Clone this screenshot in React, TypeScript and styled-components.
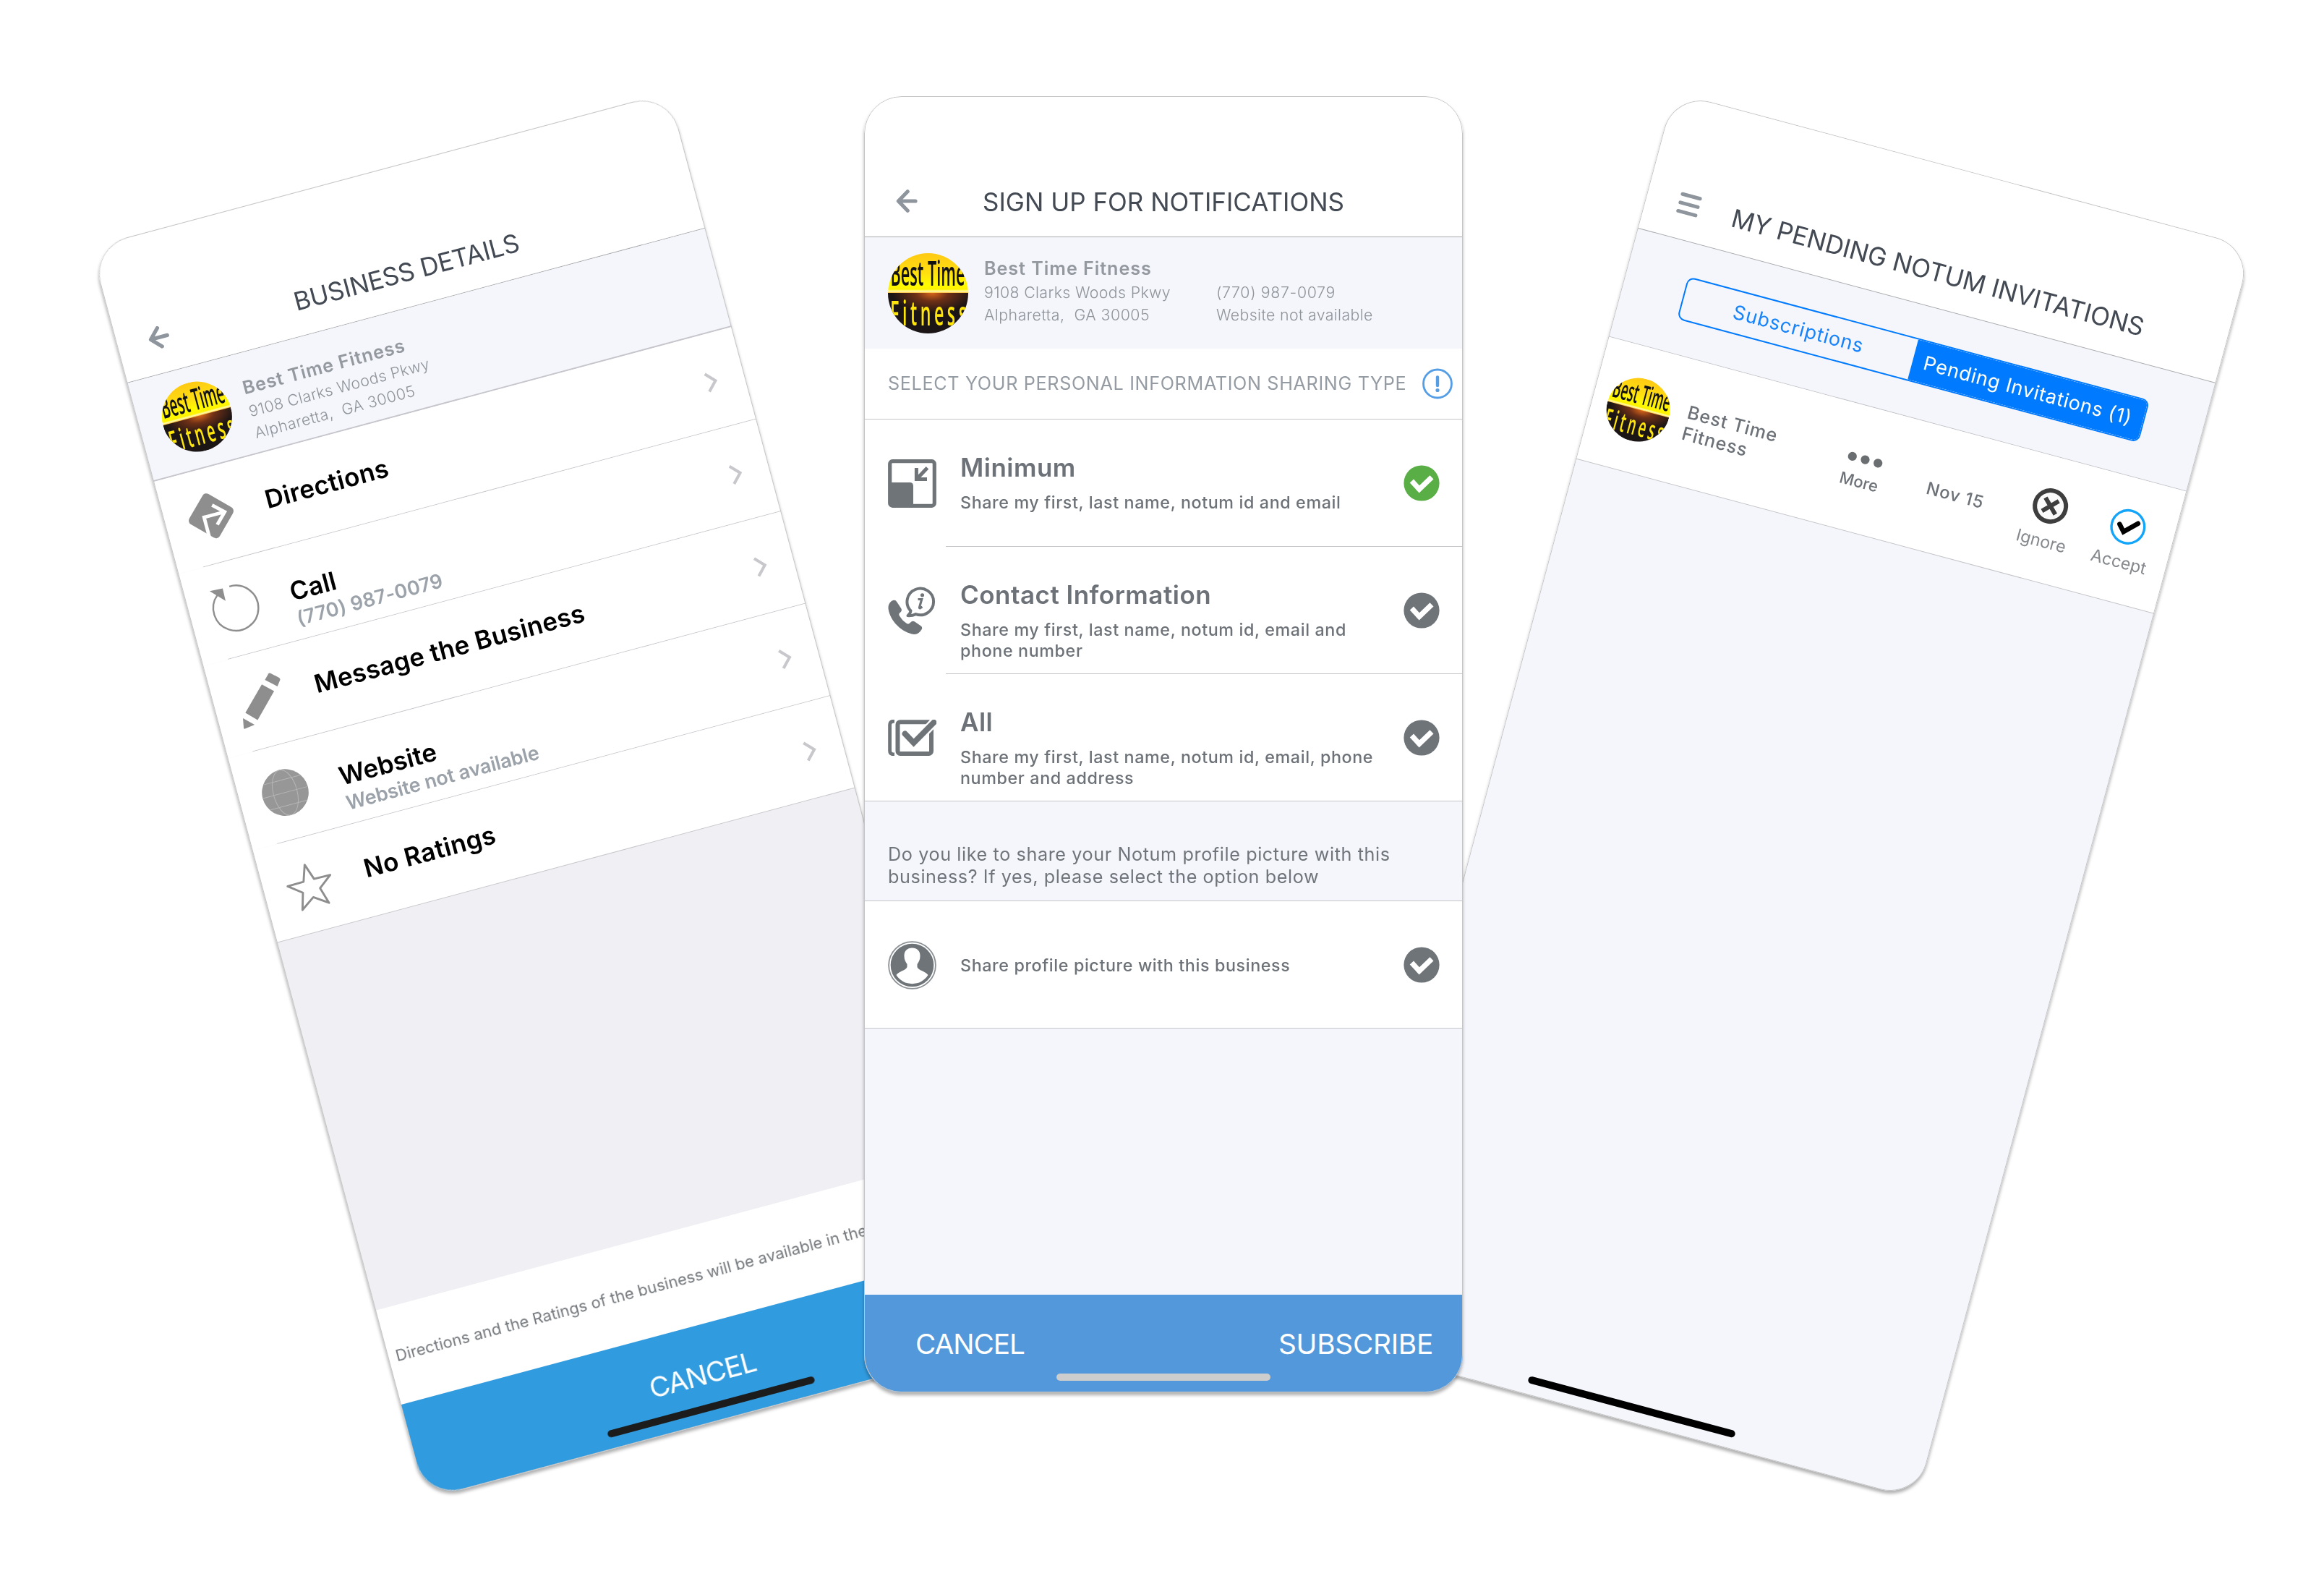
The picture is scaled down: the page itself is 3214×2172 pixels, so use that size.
import React from 'react';
import styled, { createGlobalStyle } from 'styled-components';

const GlobalStyle = createGlobalStyle`
  *, *::before, *::after { box-sizing: border-box; }
  body { margin: 0; background: #fff; }
  svg { display: block; flex: none; }
`;

/* ---------- canvas and phone shells ---------- */

const Stage = styled.main`
  position: relative;
  width: 3214px;
  height: 2172px;
  overflow: hidden;
  background: #fff;
  font-family: Inter, "Liberation Sans", sans-serif;
  white-space: pre;
`;

const PhoneSlot = styled.div<{ $x: number; $y: number }>`
  position: absolute;
  left: ${(p) => p.$x}px;
  top: ${(p) => p.$y}px;
  filter: drop-shadow(0 4px 2px rgba(0, 0, 0, 0.3));
`;

const Phone = styled.section<{ $tilt?: number; $bg?: string }>`
  position: relative;
  display: flex;
  flex-direction: column;
  width: 828px;
  height: 1792px;
  border-radius: 52px;
  overflow: hidden;
  background: ${(p) => p.$bg ?? '#f5f6fb'};
  transform: rotate(${(p) => p.$tilt ?? 0}deg);

  &::after {
    content: '';
    position: absolute;
    inset: 0;
    border: 1px solid #c4c4c4;
    border-radius: 52px;
    pointer-events: none;
  }
`;

const HomeIndicator = styled.div<{ $color: string }>`
  position: absolute;
  left: 266px;
  bottom: 16px;
  width: 296px;
  height: 10px;
  border-radius: 5px;
  background: ${(p) => p.$color};
`;

const Spacer = styled.div`
  flex: 1;
`;

/* ---------- navigation bar ---------- */

const NavBar = styled.header<{ $endPad?: number }>`
  display: flex;
  align-items: center;
  height: 195px;
  padding: 98px ${(p) => p.$endPad ?? 74}px 0 44px;
  background: #fff;
  border-bottom: 1px solid #a9abae;
`;

const NavTitle = styled.h1<{ $track?: number }>`
  flex: 1;
  margin: 0;
  font-size: 35px;
  font-weight: 400;
  line-height: 42px;
  letter-spacing: ${(p) => p.$track ?? 0}px;
  text-align: center;
  color: #434a54;
`;

const NavIcon = styled.div`
  width: 30px;
  margin-top: -3px;
`;

/* ---------- business summary ---------- */

const Summary = styled.div<{ $compact?: boolean }>`
  display: flex;
  align-items: center;
  gap: ${(p) => (p.$compact ? 23 : 22)}px;
  height: ${(p) => (p.$compact ? 141 : 154)}px;
  padding-left: 33px;
  background: #f5f6fb;
  border-bottom: ${(p) => (p.$compact ? '2px solid #c6c6cc' : '0')};
`;

const SummaryText = styled.div<{ $compact?: boolean }>`
  display: grid;
  grid-template-columns: 321px auto;
  align-self: flex-start;
  padding-top: ${(p) => (p.$compact ? 31 : 26)}px;
`;

const SummaryName = styled.div`
  grid-column: 1 / -1;
  margin-bottom: 1px;
  font-size: 25.2px;
  font-weight: 600;
  line-height: 34px;
  letter-spacing: 0.93px;
  color: #9499a0;
`;

const SummaryLine = styled.div<{ $track?: number }>`
  font-size: 21.3px;
  font-weight: 300;
  line-height: 31px;
  letter-spacing: ${(p) => p.$track ?? 0.36}px;
  color: #8f949b;
`;

/* ---------- sharing form ---------- */

const SectionHead = styled.div`
  display: flex;
  align-items: center;
  justify-content: space-between;
  height: 98px;
  padding: 0 14px 0 33px;
  background: #fff;
  border-bottom: 1px solid #c4c5c9;
  font-size: 25.2px;
  line-height: 31px;
  letter-spacing: 0.65px;
  color: #959ba2;
`;

const OptionRow = styled.div<{ $inset?: boolean }>`
  display: flex;
  align-items: center;
  height: 176px;
  padding: 0 32px 0 33px;
  background:
    linear-gradient(#c4c5c9, #c4c5c9) right bottom /
      ${(p) => (p.$inset ? 'calc(100% - 113px)' : '100%')} 1px no-repeat,
    #fff;
`;

const OptionText = styled.div<{ $top?: boolean }>`
  flex: 1;
  align-self: ${(p) => (p.$top ? 'flex-start' : 'center')};
  padding-top: ${(p) => (p.$top ? 44.5 : 0)}px;
  padding-left: 33px;
`;

const OptionTitle = styled.div`
  margin-bottom: 13px;
  font-size: 35px;
  font-weight: 600;
  line-height: 42px;
  letter-spacing: 0.48px;
  color: #6d7278;
`;

const OptionNote = styled.div`
  font-size: 23.3px;
  font-weight: 500;
  line-height: 29px;
  letter-spacing: 0.61px;
  color: #6d7278;
`;

const Question = styled.div`
  height: 138px;
  padding: 58px 0 0 33px;
  border-bottom: 1px solid #c4c5c9;
  font-size: 25.2px;
  line-height: 31px;
  letter-spacing: 0.6px;
  color: #6f757b;
`;

const ActionBar = styled.footer<{ $color: string; $center?: boolean }>`
  display: flex;
  justify-content: ${(p) => (p.$center ? 'center' : 'space-between')};
  height: 135px;
  padding: ${(p) => (p.$center ? '45px 0 0' : '45px 41px 0 71px')};
  background: ${(p) => p.$color};
`;

const ActionLabel = styled.span<{ $track: number }>`
  font-size: 38.8px;
  line-height: 46px;
  letter-spacing: ${(p) => p.$track}px;
  color: #fff;
`;

/* ---------- business details ---------- */

const DetailRow = styled.div<{ $last?: boolean }>`
  display: flex;
  align-items: center;
  height: 132px;
  padding: 0 36px 0 31px;
  background:
    linear-gradient(#c8c7cc, #c8c7cc) right bottom /
      ${(p) => (p.$last ? '100%' : 'calc(100% - 36px)')} 1px no-repeat,
    #fff;
`;

const DetailText = styled.div`
  flex: 1;
  align-self: flex-start;
  padding: 43px 0 0 44px;
`;

const DetailTitle = styled.div<{ $track: number }>`
  font-size: 35px;
  font-weight: 600;
  line-height: 42px;
  letter-spacing: ${(p) => p.$track}px;
  color: #000;
`;

const DetailNote = styled.div<{ $track: number }>`
  margin-top: 1px;
  font-size: 27px;
  font-weight: 600;
  line-height: 34px;
  letter-spacing: ${(p) => p.$track}px;
  color: #9ba2a9;
`;

const Notice = styled.div`
  display: flex;
  align-items: center;
  height: 135px;
  padding-left: 11px;
  background: #fff;
  font-size: 22px;
  letter-spacing: 0.04px;
  color: #74787c;
`;

/* ---------- pending invitations ---------- */

const SegmentBand = styled.div`
  height: 155px;
  padding: 46px 82px 0 85px;
  border-bottom: 1px solid #c4c5c9;
`;

const Segments = styled.div`
  display: grid;
  grid-template-columns: 328px 1fr;
  height: 61px;
  border: 2px solid #007aff;
  border-radius: 10px;
  overflow: hidden;
`;

const Segment = styled.div<{ $active?: boolean; $track: number }>`
  display: flex;
  align-items: center;
  justify-content: center;
  font-size: 27px;
  letter-spacing: ${(p) => p.$track}px;
  color: ${(p) => (p.$active ? '#fff' : '#1683fb')};
  background: ${(p) => (p.$active ? '#007aff' : 'transparent')};
`;

const InviteRow = styled.div`
  display: grid;
  grid-template-columns: 111px 195px 117px 150px 112px 110px;
  align-items: center;
  height: 175px;
  padding-left: 22px;
  background: #fff;
  border-bottom: 1px solid #c4c5c9;
`;

const InviteName = styled.div`
  font-size: 25.2px;
  font-weight: 500;
  line-height: 30px;
  letter-spacing: 0.9px;
  color: #6d7278;
`;

const InviteCell = styled.div<{ $gap: number; $shift?: number }>`
  display: flex;
  flex-direction: column;
  align-items: center;
  gap: ${(p) => p.$gap}px;
  padding-top: ${(p) => p.$shift ?? 0}px;
`;

const MoreLabel = styled.span`
  font-size: 22px;
  font-weight: 500;
  line-height: 26px;
  color: #6d7278;
`;

const InviteDate = styled.div`
  font-size: 23.8px;
  font-weight: 500;
  letter-spacing: 0.8px;
  text-align: center;
  color: #6d7278;
`;

const InviteAction = styled.span`
  font-size: 23.3px;
  line-height: 28px;
  color: #85898d;
`;

/* ---------- drawings ---------- */

const Logo = ({ size }: { size: number }) => (
  <svg width={size} height={size} viewBox="0 0 110 110">
    <defs>
      <linearGradient id="sky" x1="0" y1="0" x2="0" y2="1">
        <stop offset="0" stopColor="#ffc914" />
        <stop offset="0.5" stopColor="#ffdf10" />
        <stop offset="0.78" stopColor="#fffb00" />
        <stop offset="0.9" stopColor="#fff200" />
        <stop offset="0.95" stopColor="#fffbb0" />
        <stop offset="1" stopColor="#ffae1a" />
      </linearGradient>
      <radialGradient id="glow" cx="0.55" cy="0" r="0.5">
        <stop offset="0" stopColor="#d9661a" />
        <stop offset="0.4" stopColor="#6e3016" />
        <stop offset="1" stopColor="#1b1515" />
      </radialGradient>
      <clipPath id="disc">
        <circle cx="55" cy="55" r="55" />
      </clipPath>
    </defs>
    <g clipPath="url(#disc)">
      <rect width="110" height="55" fill="url(#sky)" />
      <rect y="54.5" width="110" height="56" fill="url(#glow)" />
      <g fontFamily="'Open Sans', 'Noto Sans', sans-serif" fontSize="47">
        <text x="3.5" y="44.8" textLength="102" lengthAdjust="spacingAndGlyphs" fontWeight="600" fill="#111">
          Best Time
        </text>
        <g transform="translate(3 99) scale(0.5 1)">
          <text fontSize="46" fontWeight="600" letterSpacing="9" fill="#ffe60a">
            Fitness
          </text>
        </g>
      </g>
    </g>
  </svg>
);

const BackArrow = () => (
  <svg width="30" height="32" viewBox="0 0 30 32" fill="none" stroke="#8e959d" strokeWidth="5.2" strokeLinecap="round" strokeLinejoin="round">
    <path d="M16.2 2.8 3.4 16l12.8 13.2M4 16h23" />
  </svg>
);

const MenuBars = () => (
  <svg width="34" height="32" viewBox="0 0 34 32" stroke="#8e959d" strokeWidth="5" strokeLinecap="round">
    <path d="M4 4h25M4 16h25M4 28h25" />
  </svg>
);

const InfoIcon = () => (
  <svg width="42" height="43" viewBox="0 0 42 42" fill="none" stroke="#559ee6">
    <circle cx="21" cy="21" r="19.5" strokeWidth="2.8" />
    <path d="M21 12v11.5" strokeWidth="4.4" strokeLinecap="round" />
    <circle cx="21" cy="30" r="2.6" fill="#559ee6" stroke="none" />
  </svg>
);

const TICK = '#6f7479';

const CheckDisc = ({ color = TICK }: { color?: string }) => (
  <svg width="50" height="50" viewBox="0 0 50 50" fill="none">
    <circle cx="25" cy="25" r="24.6" fill={color} />
    <path d="M11.4 22 21.8 33.4 39 16.8" stroke="#fff" strokeWidth="7.2" />
  </svg>
);

const ShrinkIcon = () => (
  <svg width="67" height="67" viewBox="0 0 67 67" fill="none">
    <rect x="2.7" y="2.7" width="61.6" height="61.6" rx="3.5" stroke={TICK} strokeWidth="5.2" />
    <path d="M2 32h28.5a4.5 4.5 0 0 1 4.5 4.5V65H4a2 2 0 0 1-2-2z" fill={TICK} />
    <path d="M39.4 12v15.6H54M40.5 26.5 54.5 11.8" stroke={TICK} strokeWidth="5" />
  </svg>
);

const ContactIcon = () => (
  <svg width="67" height="67" viewBox="0 0 67 67" fill="none">
    <path
      d="M8 18.8c1.7-.4 3 .4 4 2l6 9c1.4 2.2 1.2 4-.8 5.8-2 1.800-2.400 3-1.200 5 2.600 4.400 5.800 7.800 10 10.400 1.800 1 3.200.8 5-1.200 1.800-2.200 4-2.600 6-1.200l8.400 5.600c2 1.400 2.400 3.200 1 5.400-2.800 4.400-6 6.700-10.400 6.300C20 64 3 48 .6 31-.1 25 3 20 8 18.800z"
      fill={TICK}
    />
    <path d="M31.5 33.5a18.300 18.300 0 1 1 7 4.600c-3.500 1.700-7 2.200-11 2 2.600-1.800 3.600-4 4-6.600z" stroke={TICK} strokeWidth="4" strokeLinejoin="round" />
    <path d="M41.5 17.5h5.200l-3.200 11.300c-.2 1 .4 1.300 1.200.9l2.800-1.700" stroke={TICK} strokeWidth="3.2" />
    <circle cx="47.5" cy="11.8" r="2.600" fill={TICK} />
  </svg>
);

const ChecklistIcon = () => (
  <svg width="67" height="50" viewBox="0 0 67 50" fill="none" stroke={TICK}>
    <path d="M9 2C5 2 2.600 3.800 2.600 7v36c0 3.200 2.400 5 6.400 5" strokeWidth="4.800" />
    <rect x="13.500" y="3.200" width="46.500" height="43.800" rx="3.500" strokeWidth="6" />
    <path d="M23 20 36 32.500 66 1" stroke="#fff" strokeWidth="12.500" />
    <path d="M23.600 19.500 35.600 32 63.500 3.800" strokeWidth="8" strokeLinecap="round" />
  </svg>
);

const PersonIcon = () => (
  <svg width="67" height="67" viewBox="0 0 67 67" fill="none">
    <circle cx="33.5" cy="33.5" r="32.400" stroke="#8b9094" strokeWidth="1.800" />
    <circle cx="33.5" cy="33.5" r="29.800" fill={TICK} />
    <path
      d="M33.500 9.500c7 0 11.300 4.500 11 11.500 0 5-2 8-4 11v4c1.500 4.500 11.500 6 15 11a26 26 0 0 1-44 0c3.500-5 13.500-6.500 15-11v-4c-2-3-4-6-4-11-.3-7 4-11.500 11-11.500z"
      fill="#fff"
    />
  </svg>
);

const GREY = '#8e8e8e';

const DirectionsIcon = () => (
  <svg width="68" height="68" viewBox="-34 -34 68 68" fill="none">
    <rect x="-24.3" y="-24.3" width="48.6" height="48.6" rx="6" transform="rotate(45)" fill={GREY} />
    <path d="M5-14 19.5-.5 5 14M18-.5H-10M-10-2.900V27.500" stroke="#fff" strokeWidth="4.800" />
  </svg>
);

const CallIcon = () => (
  <svg width="68" height="68" viewBox="-34 -34 68 68" fill="none">
    <path d="M-1-31.200A31.200 31.200 0 1 1-20-24" stroke={GREY} strokeWidth="2.400" />
    <path d="M-29-32-10.600-31-11.200-13.200z" fill={GREY} />
  </svg>
);

const PencilIcon = () => (
  <svg width="68" height="68" viewBox="-34 -34 68 68" fill={GREY}>
    <path d="M20.200-32.900q1.500-.6 3 .6l9.300 8.500q2 2 .9 3.600l-5.900 7.600L13.100-25.700z" />
    <path d="M7.300-20.800 21.400-7.500-11 25.400-24.800 11.300z" />
    <path d="M-29.900 17.600-16.700 30.500-31 32.500q-1.600 0-1.400-1.600z" />
  </svg>
);

const GlobeIcon = () => (
  <svg width="68" height="68" viewBox="-34 -34 68 68" fill="none">
    <circle r="32.300" fill="#979797" />
    <g stroke="#b6b6b6" strokeWidth="1">
      <path d="M-32 0H32M-26.500-18H26.500M-26.500 18H26.500" />
      <ellipse rx="16.500" ry="32" />
    </g>
  </svg>
);

const StarIcon = () => (
  <svg width="68" height="68" viewBox="-34 -34 68 68" fill="none">
    <path
      d="M0-28.500 7.500-6.300 30.500-5.800 12.300 8.200 19 31 0 17.800-19 31-12.300 8.200-30.500-5.800-7.500-6.300z"
      stroke={GREY}
      strokeWidth="2.900"
      strokeLinejoin="round"
    />
  </svg>
);

const Chevron = () => (
  <svg width="22" height="30" viewBox="0 0 22 30" fill="none">
    <path d="M5 2.500 17 15 5 27.500" stroke="#c7c7cc" strokeWidth="4" />
  </svg>
);

const MoreDots = () => (
  <svg width="50" height="13" viewBox="0 0 50 13" fill="#6b6e70">
    <circle cx="6.700" cy="6.500" r="6.100" />
    <circle cx="25" cy="6.500" r="6.100" />
    <circle cx="43.300" cy="6.500" r="6.100" />
  </svg>
);

const IgnoreIcon = () => (
  <svg width="50" height="50" viewBox="-25 -25 50 50" fill="none" stroke="#3e3e3e">
    <circle r="21.500" fill="#fafafa" strokeWidth="6" />
    <path d="M-9.500-9.500 9.500 9.500M9.500-9.500-9.500 9.500" strokeWidth="6" />
  </svg>
);

const AcceptIcon = () => (
  <svg width="50" height="50" viewBox="-25 -25 50 50" fill="none">
    <circle r="22.800" stroke="#12a5f9" strokeWidth="3.400" />
    <path d="M-12-.5-4.200 8.200 12.300-8" stroke="#000" strokeWidth="6.600" strokeLinecap="round" />
  </svg>
);

/* ---------- screens ---------- */

const details = [
  { icon: <DirectionsIcon />, title: 'Directions', track: 0.35 },
  { icon: <CallIcon />, title: 'Call', track: 0.35, note: '(770) 987-0079', noteTrack: 0.1 },
  { icon: <PencilIcon />, title: 'Message the Business', track: 0.3 },
  { icon: <GlobeIcon />, title: 'Website', track: 0.1, note: 'Website not available', noteTrack: -0.15 },
  { icon: <StarIcon />, title: 'No Ratings', track: 0.4 },
];

const options = [
  { icon: <ShrinkIcon />, title: 'Minimum', note: 'Share my first, last name, notum id and email', on: true },
  { icon: <ContactIcon />, title: 'Contact Information', note: 'Share my first, last name, notum id, email and\nphone number' },
  { icon: <ChecklistIcon />, title: 'All', note: 'Share my first, last name, notum id, email, phone\nnumber and address' },
];

const BusinessDetails = () => (
  <Phone $tilt={-15} $bg="#efeff4">
    <NavBar $endPad={76}>
      <NavIcon><BackArrow /></NavIcon>
      <NavTitle $track={-0.22}>BUSINESS DETAILS</NavTitle>
    </NavBar>
    <Summary $compact>
      <Logo size={97} />
      <SummaryText $compact>
        <SummaryName>Best Time Fitness</SummaryName>
        <SummaryLine>9108 Clarks Woods Pkwy</SummaryLine>
        <span />
        <SummaryLine $track={0.49}>{'Alpharetta,  GA 30005'}</SummaryLine>
      </SummaryText>
    </Summary>
    {details.map((d, i) => (
      <DetailRow key={d.title} $last={i === details.length - 1}>
        {d.icon}
        <DetailText>
          <DetailTitle $track={d.track}>{d.title}</DetailTitle>
          {d.note && <DetailNote $track={d.noteTrack ?? 0}>{d.note}</DetailNote>}
        </DetailText>
        <Chevron />
      </DetailRow>
    ))}
    <Spacer />
    <Notice>Directions and the Ratings of the business will be available in the</Notice>
    <ActionBar $color="#319bdf" $center>
      <ActionLabel $track={-1.05}>CANCEL</ActionLabel>
    </ActionBar>
    <HomeIndicator $color="#1c1c1c" />
  </Phone>
);

const PendingInvitations = () => (
  <Phone $tilt={15}>
    <NavBar $endPad={68}>
      <NavIcon><MenuBars /></NavIcon>
      <NavTitle $track={-0.1}>MY PENDING NOTUM INVITATIONS</NavTitle>
    </NavBar>
    <SegmentBand>
      <Segments>
        <Segment $track={0.86}>Subscriptions</Segment>
        <Segment $active $track={0.74}>Pending Invitations (1)</Segment>
      </Segments>
    </SegmentBand>
    <InviteRow>
      <Logo size={88} />
      <InviteName>{'Best Time\nFitness'}</InviteName>
      <InviteCell $gap={12} $shift={9}>
        <MoreDots />
        <MoreLabel>More</MoreLabel>
      </InviteCell>
      <InviteDate>Nov 15</InviteDate>
      <InviteCell $gap={11}>
        <IgnoreIcon />
        <InviteAction>Ignore</InviteAction>
      </InviteCell>
      <InviteCell $gap={11}>
        <AcceptIcon />
        <InviteAction>Accept</InviteAction>
      </InviteCell>
    </InviteRow>
    <HomeIndicator $color="#000" />
  </Phone>
);

const SignUp = () => (
  <Phone>
    <NavBar>
      <NavIcon><BackArrow /></NavIcon>
      <NavTitle>SIGN UP FOR NOTIFICATIONS</NavTitle>
    </NavBar>
    <Summary>
      <Logo size={111} />
      <SummaryText>
        <SummaryName>Best Time Fitness</SummaryName>
        <SummaryLine>9108 Clarks Woods Pkwy</SummaryLine>
        <SummaryLine $track={0.66}>(770) 987-0079</SummaryLine>
        <SummaryLine $track={0.49}>{'Alpharetta,  GA 30005'}</SummaryLine>
        <SummaryLine>Website not available</SummaryLine>
      </SummaryText>
    </Summary>
    <SectionHead>
      <span>SELECT YOUR PERSONAL INFORMATION SHARING TYPE</span>
      <InfoIcon />
    </SectionHead>
    {options.map((o, i) => (
      <OptionRow key={o.title} $inset={i < options.length - 1}>
        {o.icon}
        <OptionText $top>
          <OptionTitle>{o.title}</OptionTitle>
          <OptionNote>{o.note}</OptionNote>
        </OptionText>
        <CheckDisc color={o.on ? '#5aae46' : undefined} />
      </OptionRow>
    ))}
    <Question>{'Do you like to share your Notum profile picture with this\nbusiness? If yes, please select the option below'}</Question>
    <OptionRow>
      <PersonIcon />
      <OptionText>
        <OptionNote>Share profile picture with this business</OptionNote>
      </OptionText>
      <CheckDisc />
    </OptionRow>
    <Spacer />
    <ActionBar $color="#5298da">
      <ActionLabel $track={-1.05}>CANCEL</ActionLabel>
      <ActionLabel $track={-0.27}>SUBSCRIBE</ActionLabel>
    </ActionBar>
    <HomeIndicator $color="#cdcdcd" />
  </Phone>
);

export default function App() {
  return (
    <>
      <GlobalStyle />
      <Stage>
        <PhoneSlot $x={343.2} $y={203.8}>
          <BusinessDetails />
        </PhoneSlot>
        <PhoneSlot $x={2068.5} $y={203.5}>
          <PendingInvitations />
        </PhoneSlot>
        <PhoneSlot $x={1195} $y={133}>
          <SignUp />
        </PhoneSlot>
      </Stage>
    </>
  );
}
